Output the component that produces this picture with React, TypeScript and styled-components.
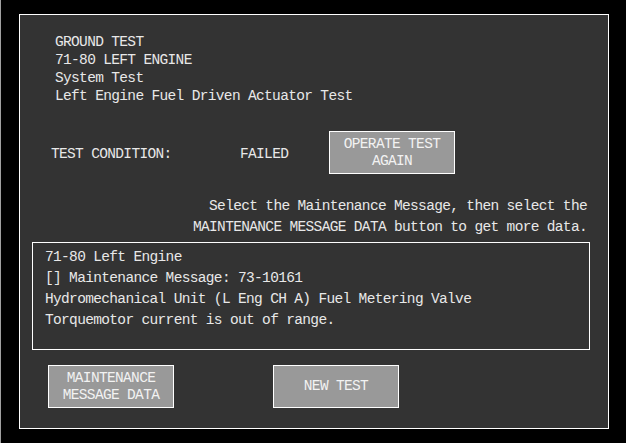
import React from "react";
import styled, { createGlobalStyle } from "styled-components";

const Global = createGlobalStyle`
  html, body { margin: 0; padding: 0; background: #000; }
  body { font-family: "Liberation Mono", "DejaVu Sans Mono", monospace; }
`;

const Screen = styled.div`
  box-sizing: border-box;
  width: 626px;
  height: 443px;
  background: #000;
  border-left: 1px solid #a0a0a0;
  padding: 14px 0 0 18px;
`;

const Panel = styled.div`
  box-sizing: border-box;
  width: 590px;
  height: 415px;
  background: #333333;
  border: 1px solid #ffffff;
  display: flex;
  flex-direction: column;
  color: #e8e8e8;
  font-size: 14.5px;
  letter-spacing: -0.66px;
`;

const Header = styled.div`
  padding: 18px 0 0 35px;
  line-height: 18px;
  white-space: pre;
`;

const ConditionRow = styled.div`
  display: flex;
  align-items: center;
  margin-top: 26px;
  padding-left: 31px;
  height: 43px;
`;

const Label = styled.div<{ $w: number }>`
  width: ${(p) => p.$w}px;
  flex-shrink: 0;
  padding-top: 2px;
`;

const Button = styled.div<{ $w: number }>`
  box-sizing: border-box;
  width: ${(p) => p.$w}px;
  height: 43px;
  background: #999999;
  border: 1px solid #ffffff;
  color: #f2f2f2;
  display: flex;
  align-items: center;
  justify-content: center;
  text-align: center;
  line-height: 17px;
  flex-shrink: 0;
`;

const Instruction = styled.div`
  margin-top: 22px;
  padding-right: 21px;
  text-align: right;
  line-height: 21px;
  white-space: pre;
`;

const MessageBox = styled.div`
  box-sizing: border-box;
  margin: 4px 0 0 12px;
  width: 558px;
  height: 108px;
  border: 1px solid #ffffff;
  padding: 4px 0 0 12px;
  line-height: 21px;
  white-space: pre;
`;

const ButtonRow = styled.div`
  display: flex;
  gap: 99px;
  margin: 15px 0 0 28px;
`;

export default function App() {
  return (
    <>
      <Global />
      <Screen>
        <Panel>
          <Header>
            <div>GROUND TEST</div>
            <div>71-80 LEFT ENGINE</div>
            <div>System Test</div>
            <div>Left Engine Fuel Driven Actuator Test</div>
          </Header>
          <ConditionRow>
            <Label $w={189}>TEST CONDITION:</Label>
            <Label $w={89}>FAILED</Label>
            <Button $w={126}>
              OPERATE TEST
              <br />
              AGAIN
            </Button>
          </ConditionRow>
          <Instruction>
            <div>Select the Maintenance Message, then select the</div>
            <div>MAINTENANCE MESSAGE DATA button to get more data.</div>
          </Instruction>
          <MessageBox>
            <div>71-80 Left Engine</div>
            <div>[] Maintenance Message: 73-10161</div>
            <div>Hydromechanical Unit (L Eng CH A) Fuel Metering Valve</div>
            <div>Torquemotor current is out of range.</div>
          </MessageBox>
          <ButtonRow>
            <Button $w={126}>
              MAINTENANCE
              <br />
              MESSAGE DATA
            </Button>
            <Button $w={126}>NEW TEST</Button>
          </ButtonRow>
        </Panel>
      </Screen>
    </>
  );
}
